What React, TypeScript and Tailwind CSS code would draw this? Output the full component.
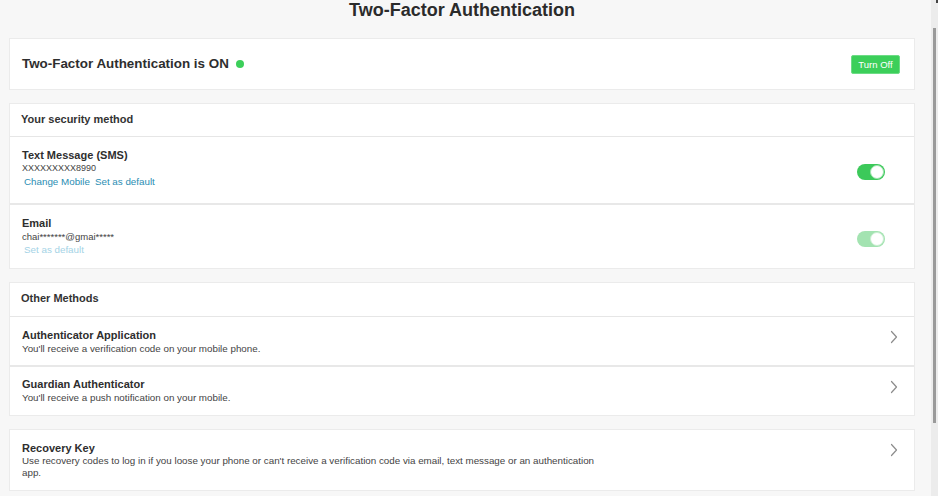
import React from "react";

function Chevron() {
  return (
    <svg width="8" height="14" viewBox="0 0 8 14" fill="none" className="shrink-0">
      <path d="M1.5 1.5 L6.5 7 L1.5 12.5" stroke="#8c8c8c" strokeWidth="1.2" strokeLinecap="round" strokeLinejoin="round" />
    </svg>
  );
}

function Toggle({ disabled }: { disabled?: boolean }) {
  return (
    <div
      className={
        disabled
          ? "w-[28px] h-[16px] rounded-full bg-[#a3e3b1] flex items-center justify-end p-[1px]"
          : "w-[28px] h-[16px] rounded-full bg-[#3cc95a] flex items-center justify-end p-[1px]"
      }
    >
      <div
        className={
          disabled
            ? "w-[14px] h-[14px] rounded-full bg-white border border-[#c9eed1]"
            : "w-[14px] h-[14px] rounded-full bg-white border border-[#9fe3ae]"
        }
      />
    </div>
  );
}

export default function App() {
  return (
    <div
      className="flex w-[938px] h-[496px] bg-[#f7f7f7] overflow-hidden text-[#333333]"
      style={{ fontFamily: '"Liberation Sans", Arial, sans-serif' }}
    >
      <main className="w-[924px] px-[9px] flex flex-col">
        <h1 className="h-[22px] text-center text-[18px] font-bold leading-[20px] text-[#2b2b2b]">
          Two-Factor Authentication
        </h1>

        {/* Status card */}
        <div className="mt-[16px] h-[52px] bg-white border border-[#ebebeb] flex items-center justify-between pl-[12px] pr-[14px]">
          <div className="flex items-center gap-[7px]">
            <span className="text-[13.4px] font-bold leading-[16px] text-[#2e2e2e]">
              Two-Factor Authentication is ON
            </span>
            <span className="w-[8px] h-[8px] rounded-full bg-[#3ccf5a] mb-[1px]" />
          </div>
          <button className="w-[49px] h-[19px] bg-[#3ccf5a] border border-[#6ddc85] rounded-[2px] text-white text-[9.5px] leading-[17px] flex items-center justify-center">
            Turn Off
          </button>
        </div>

        {/* Security method card */}
        <div className="mt-[13px] bg-white border border-[#ebebeb] flex flex-col">
          <div className="h-[32px] flex items-center pl-[11px] pb-[1px] text-[11px] font-bold text-[#333]">
            Your security method
          </div>
          <div className="h-[67px] border-t border-[#e6e6e6] flex justify-between pl-[12px] pr-[29px]">
            <div className="pt-[12px] flex flex-col">
              <div className="text-[11px] font-bold leading-[13px] text-[#2e2e2e]">Text Message (SMS)</div>
              <div className="text-[9px] leading-[13px] text-[#444]">XXXXXXXXX8990</div>
              <div className="flex gap-[5px] pl-[2px] text-[9.8px] leading-[13px] text-[#2a8db3]">
                <span>Change Mobile</span>
                <span>Set as default</span>
              </div>
            </div>
            <div className="self-center mt-[3px]">
              <Toggle />
            </div>
          </div>
          <div className="h-[65px] border-t-2 border-[#e8e8e8] flex justify-between pl-[12px] pr-[29px]">
            <div className="pt-[12px] flex flex-col">
              <div className="text-[11px] font-bold leading-[13px] text-[#2e2e2e]">Email</div>
              <div className="text-[9.5px] leading-[13px] text-[#444]">chai*******@gmai*****</div>
              <div className="pl-[2px] text-[9.8px] leading-[13px] text-[#a4d3e6]">Set as default</div>
            </div>
            <div className="self-center mt-[4px]">
              <Toggle disabled />
            </div>
          </div>
        </div>

        {/* Other methods card */}
        <div className="mt-[13px] bg-white border border-[#ebebeb] flex flex-col">
          <div className="h-[33px] flex items-center pl-[11px] pb-[2px] text-[11px] font-bold text-[#333]">
            Other Methods
          </div>
          <div className="h-[49px] border-t border-[#e6e6e6] flex justify-between items-start pl-[12px] pr-[16px]">
            <div className="flex flex-col pt-[12px]">
              <div className="text-[11px] font-bold leading-[13px] text-[#2e2e2e]">Authenticator Application</div>
              <div className="text-[9.8px] leading-[13px] text-[#444]">
                You'll receive a verification code on your mobile phone.
              </div>
            </div>
            <div className="pt-[13px]">
              <Chevron />
            </div>
          </div>
          <div className="h-[50px] border-t-2 border-[#e8e8e8] flex justify-between items-start pl-[12px] pr-[16px]">
            <div className="flex flex-col pt-[11px]">
              <div className="text-[11px] font-bold leading-[13px] text-[#2e2e2e]">Guardian Authenticator</div>
              <div className="text-[9.8px] leading-[13px] text-[#444]">
                You'll receive a push notification on your mobile.
              </div>
            </div>
            <div className="pt-[13px]">
              <Chevron />
            </div>
          </div>
        </div>

        {/* Recovery key card */}
        <div className="mt-[13px] h-[62px] bg-white border border-[#ebebeb] flex justify-between items-start pl-[12px] pr-[16px]">
          <div className="flex flex-col pt-[12px] w-[585px]">
            <div className="text-[11px] font-bold leading-[13px] text-[#2e2e2e]">Recovery Key</div>
            <div className="text-[9.8px] leading-[12px] text-[#444]">
              Use recovery codes to log in if you loose your phone or can't receive a verification code via email, text message or an authentication app.
            </div>
          </div>
          <div className="pt-[13px]">
            <Chevron />
          </div>
        </div>
      </main>

      {/* Scrollbar */}
      <div className="w-[14px] h-full pl-[7px] flex">
        <div className="w-[7px] h-full bg-[#ececec] flex flex-col">
          <div className="h-[28px] flex justify-end">
            <div className="w-[2px] h-[3px] bg-[#444]" />
          </div>
          <div className="ml-[2px] w-[3px] h-[395px] bg-[#9a9a9a]" />
        </div>
      </div>
    </div>
  );
}
